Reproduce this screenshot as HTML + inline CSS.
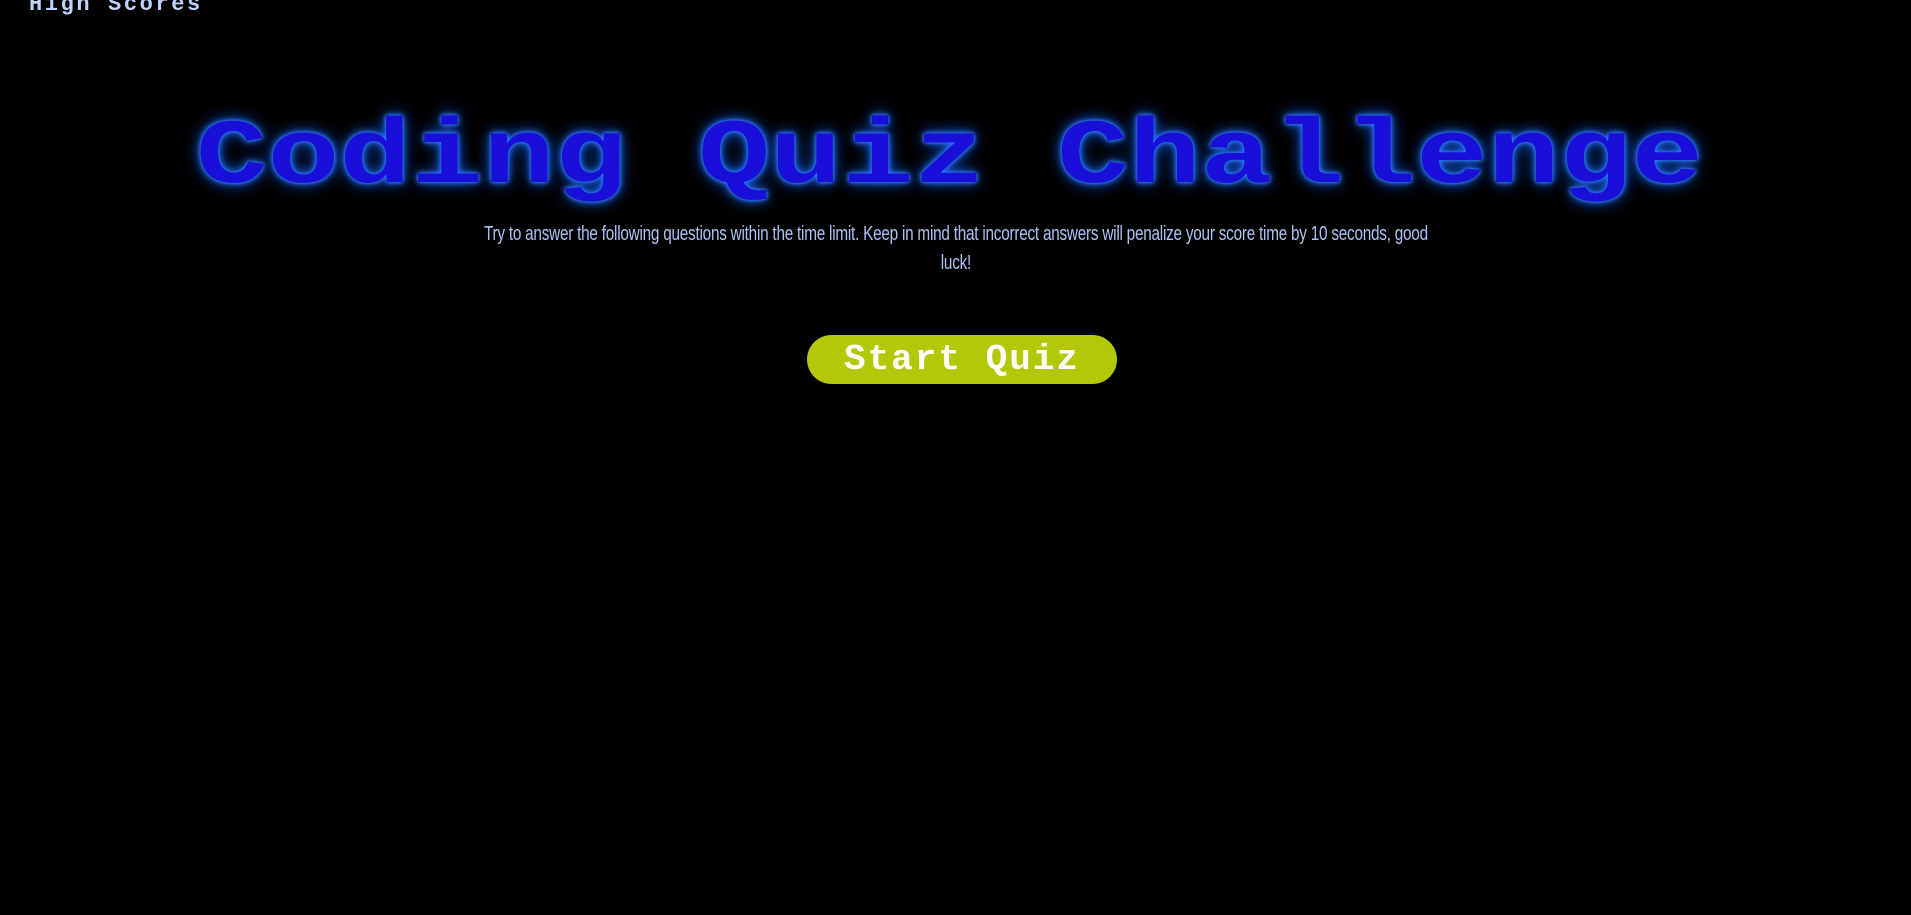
<!DOCTYPE html>
<html><head><meta charset="utf-8"><style>
html,body{margin:0;padding:0;background:#000;width:1911px;height:915px;overflow:hidden}
.hs{position:absolute;left:29px;top:-8px;font:bold 22px/26px "Liberation Mono",monospace;letter-spacing:2.6px;color:#bcd4ff}
h1{position:absolute;left:-6px;width:1911px;top:112px;margin:0;text-align:center;font:bold 92px/92px "Liberation Mono",monospace;color:#1a0fd8;text-shadow:0 0 6px #2a7bff,0 0 14px #1060ff,0 0 3px #5aa0ff;white-space:nowrap;transform:scaleX(1.3);transform-origin:center}
.pw{position:absolute;left:0;width:1911px;top:220px;text-align:center}
p{display:inline-block;margin:0;text-align:center;font:20px/29px "Liberation Sans",sans-serif;color:#aec2f5;letter-spacing:-0.3px;transform:scaleX(0.765);white-space:nowrap}
.btn{position:absolute;left:807px;top:335px;width:310px;height:49px;border-radius:25px;background:#b5c807;color:#fff;font:bold 36px/49px "Liberation Mono",monospace;text-align:center;letter-spacing:2px}
</style></head><body>
<div class="hs">High Scores</div>
<h1>Coding Quiz Challenge</h1>
<div class="pw"><p>Try to answer the following questions within the time limit. Keep in mind that incorrect answers will penalize your score time by 10 seconds, good<br>luck!</p></div>
<div class="btn">Start Quiz</div>
</body></html>
